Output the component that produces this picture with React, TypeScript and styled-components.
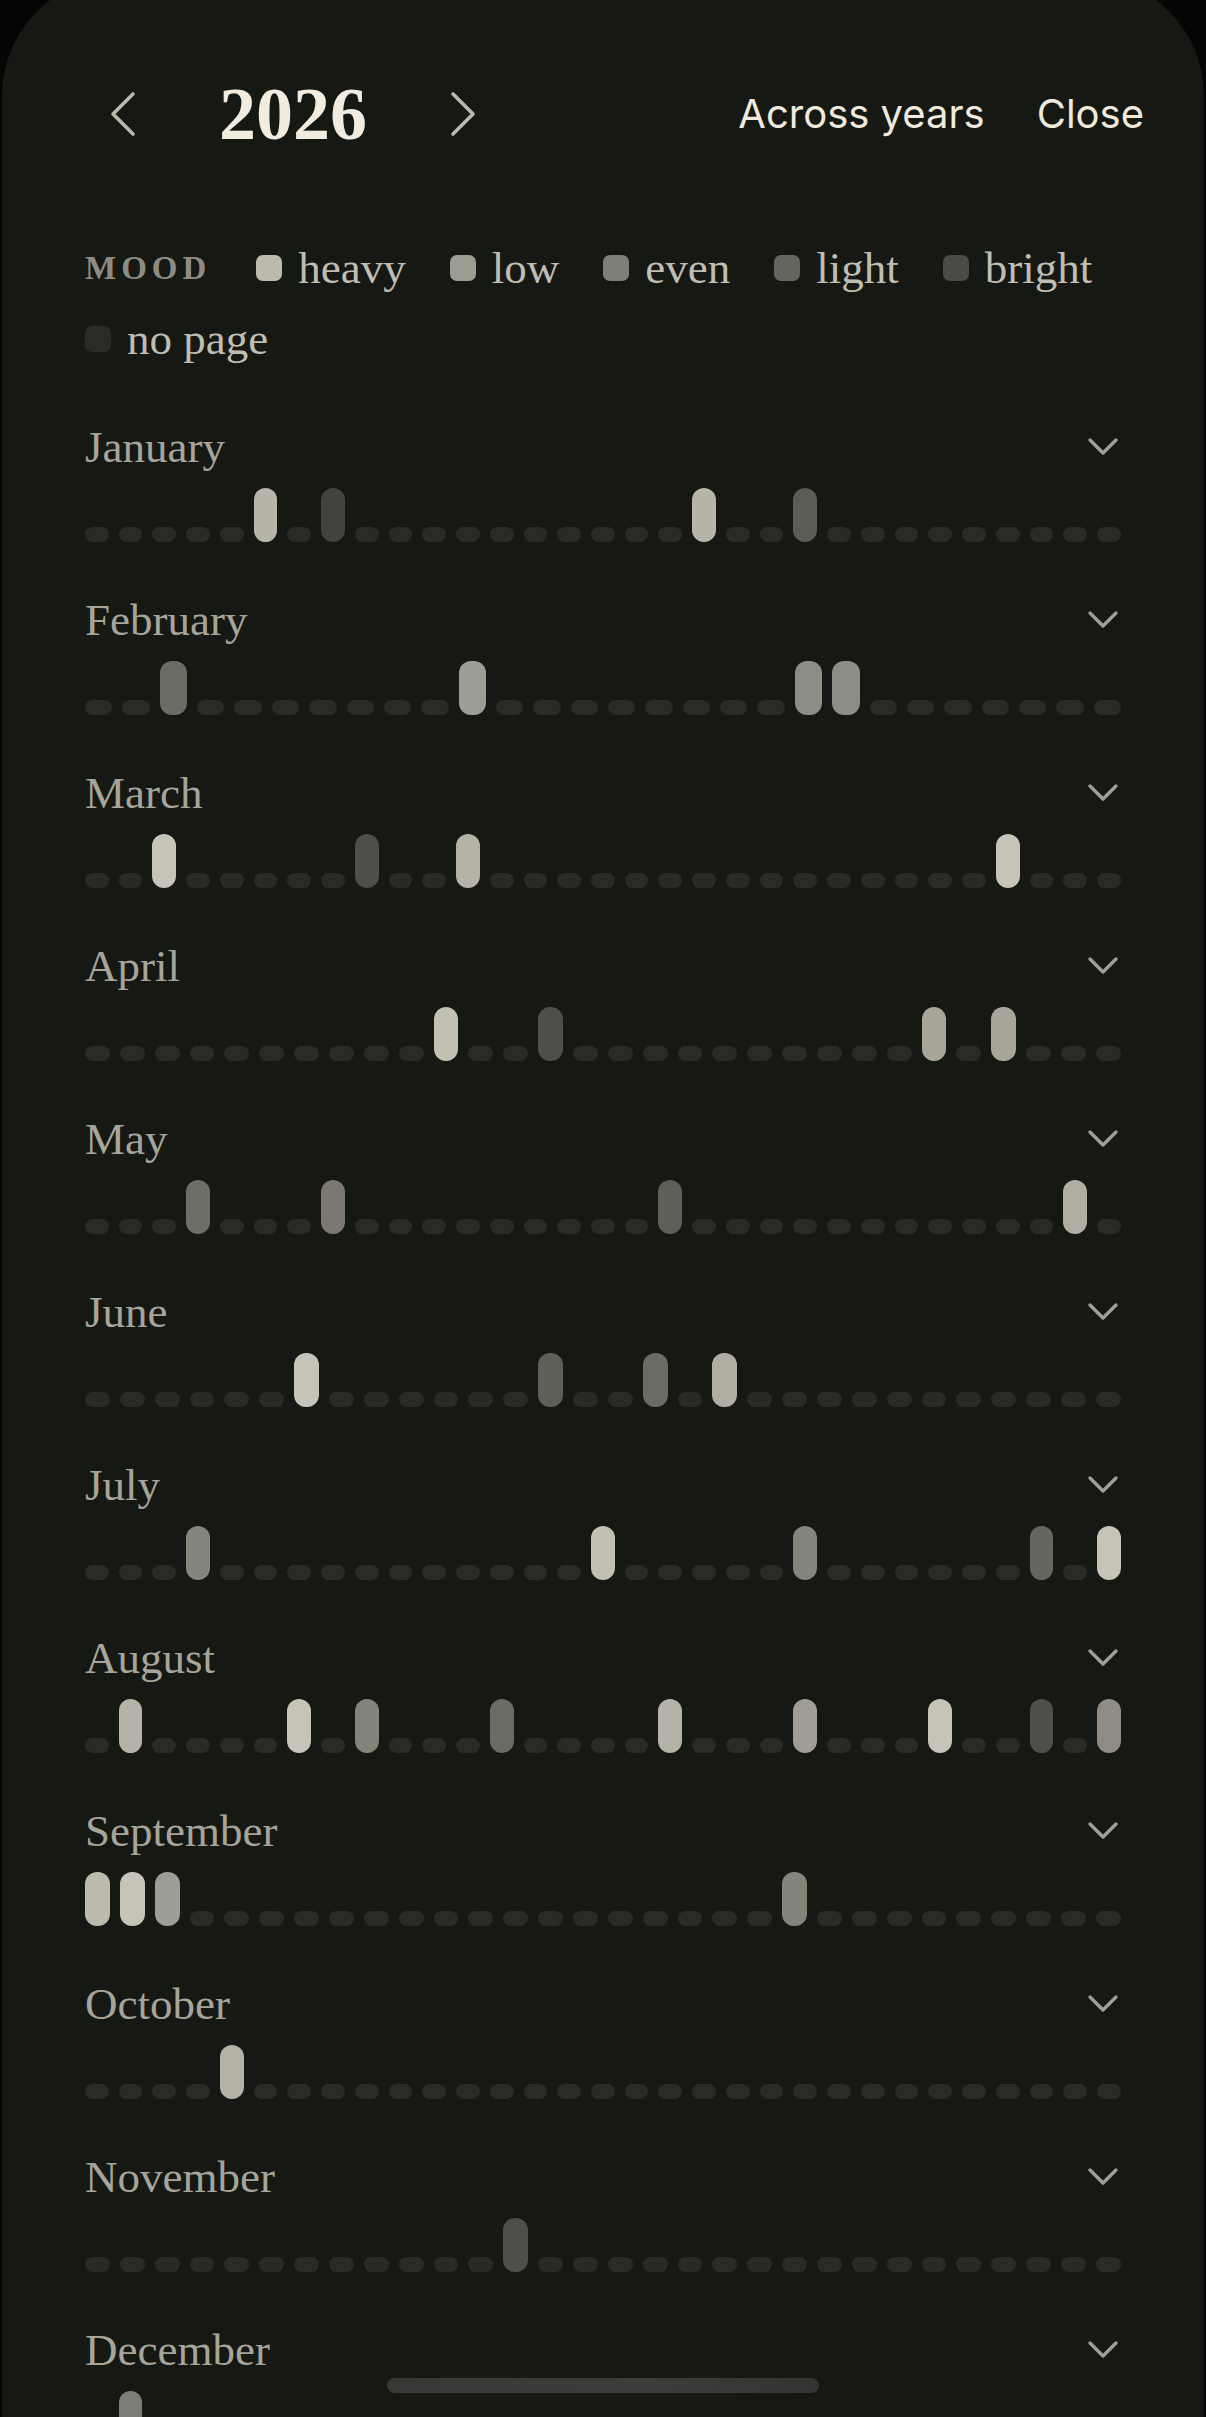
import React from 'react';
import styled, { createGlobalStyle } from 'styled-components';

const GlobalStyle = createGlobalStyle`
  * {
    box-sizing: border-box;
  }
  html, body {
    margin: 0;
    padding: 0;
    background: #050505;
  }
  body {
    font-family: "Liberation Serif", "Times New Roman", serif;
    -webkit-font-smoothing: antialiased;
  }
`;

const Sheet = styled.div`
  margin: -24px 2px 0;
  padding-top: 24px;
  min-height: 2470px;
  background: #161814;
  border-radius: 120px 120px 0 0;
`;

const Header = styled.header`
  display: flex;
  align-items: center;
  height: 228px;
  padding: 0 60px 0 107px;
`;

const YearNav = styled.div`
  display: flex;
  align-items: center;
`;

const NavButton = styled.button`
  display: flex;
  align-items: center;
  justify-content: center;
  padding: 0;
  border: none;
  background: none;
  color: #bab7ab;
  cursor: pointer;
`;

const Year = styled.h1`
  margin: 0 82px;
  font-family: "Liberation Serif", "Times New Roman", serif;
  font-size: 74px;
  font-weight: 700;
  line-height: 1;
  color: #f2ebdf;
`;

const Actions = styled.div`
  display: flex;
  align-items: center;
  gap: 52px;
  margin-left: auto;
`;

const TextButton = styled.button`
  padding: 0;
  border: none;
  background: none;
  font-family: Inter, "Noto Sans", sans-serif;
  font-size: 40px;
  line-height: 1;
  color: #f0e9dc;
  cursor: pointer;
`;

const Legend = styled.div`
  display: flex;
  flex-wrap: wrap;
  align-items: center;
  column-gap: 44px;
  row-gap: 15px;
  margin-top: 12px;
  padding: 0 83px;
`;

const LegendTitle = styled.span`
  margin-right: 1px;
  font-size: 33px;
  font-weight: 700;
  letter-spacing: 5px;
  line-height: 56px;
  color: #8e8c82;
`;

const LegendItem = styled.span`
  display: flex;
  align-items: center;
  gap: 16px;
  font-size: 45px;
  line-height: 56px;
  color: #c0bdb1;
`;

const Swatch = styled.span<{ $color: string }>`
  width: 26px;
  height: 26px;
  border-radius: 7px;
  background: ${p => p.$color};
`;

const MonthList = styled.div`
  margin-top: 54px;
  padding: 0 83px;
`;

const MonthBlock = styled.section`
  margin-bottom: 52px;
`;

const MonthHead = styled.div`
  display: flex;
  align-items: center;
  justify-content: space-between;
  height: 52px;
`;

const MonthName = styled.h2`
  margin: 0;
  font-size: 45px;
  font-weight: 400;
  line-height: 52px;
  color: #a7a599;
`;

const Toggle = styled.button`
  display: flex;
  padding: 0;
  margin-right: 2px;
  border: none;
  background: none;
  color: #a19f94;
  cursor: pointer;
`;

const Strip = styled.div`
  display: flex;
  align-items: flex-end;
  gap: 10px;
  height: 54px;
  margin-top: 15px;
`;

const Day = styled.span<{ $color?: string }>`
  flex: 1;
  height: ${p => (p.$color ? '54px' : '15px')};
  border-radius: ${p => (p.$color ? '12px' : '7.5px')};
  background: ${p => p.$color ?? '#2a2b27'};
`;

const HomeIndicator = styled.div`
  position: fixed;
  left: 50%;
  bottom: 24px;
  width: 432px;
  height: 15px;
  margin-left: -216px;
  border-radius: 8px;
  background: linear-gradient(90deg, #383836, #3c3c3a 60%, #343432);
`;

const moods = [
  { label: 'heavy', color: '#bdbbb0' },
  { label: 'low', color: '#9d9c91' },
  { label: 'even', color: '#807f77' },
  { label: 'light', color: '#65655e' },
  { label: 'bright', color: '#4b4b46' },
  { label: 'no page', color: '#2a2b27' },
];

type Month = { name: string; days: number; marks: Record<number, string> };

const months: Month[] = [
  { name: 'January', days: 31, marks: { 6: '#b7b4a9', 8: '#42433e', 19: '#b7b4a9', 22: '#5c5c54' } },
  { name: 'February', days: 28, marks: { 3: '#6b6b64', 11: '#9e9d93', 20: '#8e8d84', 21: '#8e8d84' } },
  { name: 'March', days: 31, marks: { 3: '#c6c3b8', 9: '#4f4e4a', 12: '#b5b2a7', 28: '#c6c3b8' } },
  { name: 'April', days: 30, marks: { 11: '#c2bfb3', 14: '#4f4e4a', 25: '#a8a59b', 27: '#a8a59b' } },
  { name: 'May', days: 31, marks: { 4: '#6e6e66', 8: '#7a7870', 18: '#5f5f58', 30: '#b0ada3' } },
  { name: 'June', days: 30, marks: { 7: '#c6c3b8', 14: '#5f5f58', 17: '#6b6b63', 19: '#b0ada3' } },
  { name: 'July', days: 31, marks: { 4: '#86857c', 16: '#c2bfb3', 22: '#86857c', 29: '#66665e', 31: '#c6c3b8' } },
  {
    name: 'August',
    days: 31,
    marks: {
      2: '#b5b2a7', 7: '#c6c3b8', 9: '#85847b', 13: '#6b6b63', 18: '#b5b2a7',
      22: '#a09e94', 26: '#c6c3b8', 29: '#4f4e4a', 31: '#8e8c83',
    },
  },
  { name: 'September', days: 30, marks: { 1: '#bdbaae', 2: '#c6c3b8', 3: '#9e9d93', 21: '#85847b' } },
  { name: 'October', days: 31, marks: { 5: '#b5b2a7' } },
  { name: 'November', days: 30, marks: { 13: '#4f4f4a' } },
  { name: 'December', days: 31, marks: { 2: '#7d7c74' } },
];

const ChevronLeft = () => (
  <svg width="28" height="46" viewBox="0 0 28 46" fill="none">
    <polyline points="24,3 4,23 24,43" stroke="currentColor" strokeWidth="3.6" strokeLinecap="round" strokeLinejoin="round" />
  </svg>
);

const ChevronRight = () => (
  <svg width="28" height="46" viewBox="0 0 28 46" fill="none">
    <polyline points="4,3 24,23 4,43" stroke="currentColor" strokeWidth="3.6" strokeLinecap="round" strokeLinejoin="round" />
  </svg>
);

const ChevronDown = () => (
  <svg width="32" height="20" viewBox="0 0 32 20" fill="none">
    <polyline points="3,3 16,16 29,3" stroke="currentColor" strokeWidth="3.4" strokeLinecap="round" strokeLinejoin="round" />
  </svg>
);

const App: React.FC = () => {
  return (
    <>
      <GlobalStyle />
      <Sheet>
        <Header>
          <YearNav>
            <NavButton aria-label="Previous year">
              <ChevronLeft />
            </NavButton>
            <Year>2026</Year>
            <NavButton aria-label="Next year">
              <ChevronRight />
            </NavButton>
          </YearNav>
          <Actions>
            <TextButton>Across years</TextButton>
            <TextButton>Close</TextButton>
          </Actions>
        </Header>

        <Legend>
          <LegendTitle>MOOD</LegendTitle>
          {moods.map(m => (
            <LegendItem key={m.label}>
              <Swatch $color={m.color} />
              {m.label}
            </LegendItem>
          ))}
        </Legend>

        <MonthList>
          {months.map(month => (
            <MonthBlock key={month.name}>
              <MonthHead>
                <MonthName>{month.name}</MonthName>
                <Toggle aria-label={`Expand ${month.name}`}>
                  <ChevronDown />
                </Toggle>
              </MonthHead>
              <Strip>
                {Array.from({ length: month.days }, (_, i) => (
                  <Day key={i} $color={month.marks[i + 1]} />
                ))}
              </Strip>
            </MonthBlock>
          ))}
        </MonthList>
      </Sheet>
      <HomeIndicator />
    </>
  );
};

export default App;
